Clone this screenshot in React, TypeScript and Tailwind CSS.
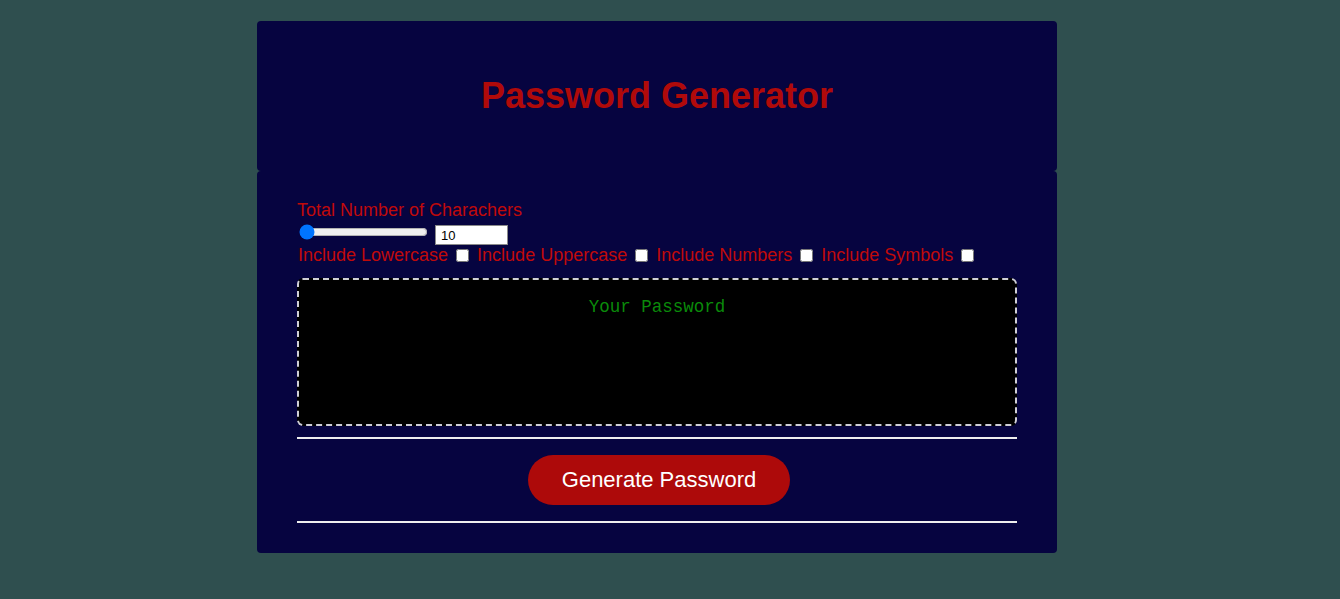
export default function App() {
  const options = ["Include Lowercase", "Include Uppercase", "Include Numbers", "Include Symbols"];

  return (
    <div className="min-h-screen bg-[#2f4f4f] pt-[21px] font-['Liberation_Sans',Arial,sans-serif]">
      <div className="ml-[257px] w-[800px]">
        <div className="flex h-[150px] items-center justify-center rounded-[4px] bg-[#060440] pb-[2px]">
          <h1 className="text-[36px] font-bold leading-[41px] text-[#b00a0a]">Password Generator</h1>
        </div>

        <div className="rounded-[4px] bg-[#060440] px-[40px] pb-[30px] pt-[29px]">
          <label className="block text-[18px] leading-[21px] text-[#c00a0a]">Total Number of Charachers</label>
          <div className="flex h-[24px] items-start">
            <input type="range" min={4} max={50} defaultValue={4} className="ml-[2px] mt-[3px] h-[16px] w-[129px]" />
            <input
              type="number"
              defaultValue={10}
              className="ml-[7px] mt-[4px] h-[20px] w-[73px] border border-[#8a8a8a] bg-white pl-[5px] text-[13px] leading-[18px] text-black"
            />
          </div>
          <div className="flex h-[21px] items-center text-[18px] leading-[21px] text-[#c00a0a]">
            {options.map((o, i) => (
              <div key={o} className={i === 0 ? "flex items-center pl-[1px]" : "ml-[8px] flex items-center"}>
                <span>{o}</span>
                <input type="checkbox" className="ml-[8px] h-[13px] w-[13px]" />
              </div>
            ))}
          </div>

          <div className="mt-[12px] h-[148px] rounded-[6px] border-2 border-dashed border-[#cfcfd6] bg-black pt-[17px] text-center font-['Liberation_Mono',monospace] text-[17.5px] leading-[20px] text-[#0a8a0a]">
            Your Password
          </div>

          <div className="mt-[11px] h-[2px] bg-[#eeeeee]" />
          <button className="ml-[231px] mt-[16px] block h-[50px] w-[262px] rounded-full bg-[#ad0a0a] pb-[2px] text-[22px] text-white">
            Generate Password
          </button>
          <div className="mt-[16px] h-[2px] bg-[#eeeeee]" />
        </div>
      </div>
    </div>
  );
}
